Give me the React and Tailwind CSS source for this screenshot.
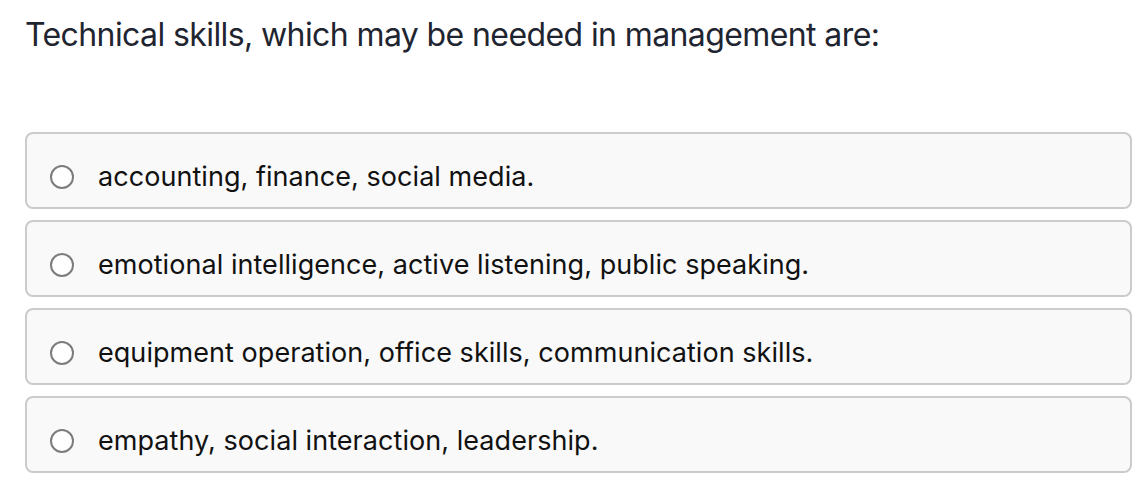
import React from "react";

const options = [
  "accounting, finance, social media.",
  "emotional intelligence, active listening, public speaking.",
  "equipment operation, office skills, communication skills.",
  "empathy, social interaction, leadership.",
];

export default function App() {
  return (
    <div
      className="bg-white w-[1146px] h-[492px] px-[25px] pt-[14px]"
      style={{ fontFamily: "Inter, 'Noto Sans', sans-serif" }}
    >
      <h1 className="text-[32px] leading-[42px] text-[#1f2530] tracking-[-0.6px]">
        Technical skills, which may be needed in management are:
      </h1>
      <div className="mt-[76px] flex flex-col gap-[11px] w-[1107px]">
        {options.map((o) => (
          <label
            key={o}
            className="h-[77px] flex items-center border-2 border-[#cbcbcb] rounded-[8px] bg-[#f9f9f9] pl-[23px] pt-[12px]"
          >
            <span className="w-[24px] h-[24px] rounded-full border-2 border-[#7c7c7c] bg-white shrink-0" />
            <span className="ml-[24px] text-[27px] leading-[34px] text-[#111] tracking-[0.05px]">{o}</span>
          </label>
        ))}
      </div>
    </div>
  );
}
